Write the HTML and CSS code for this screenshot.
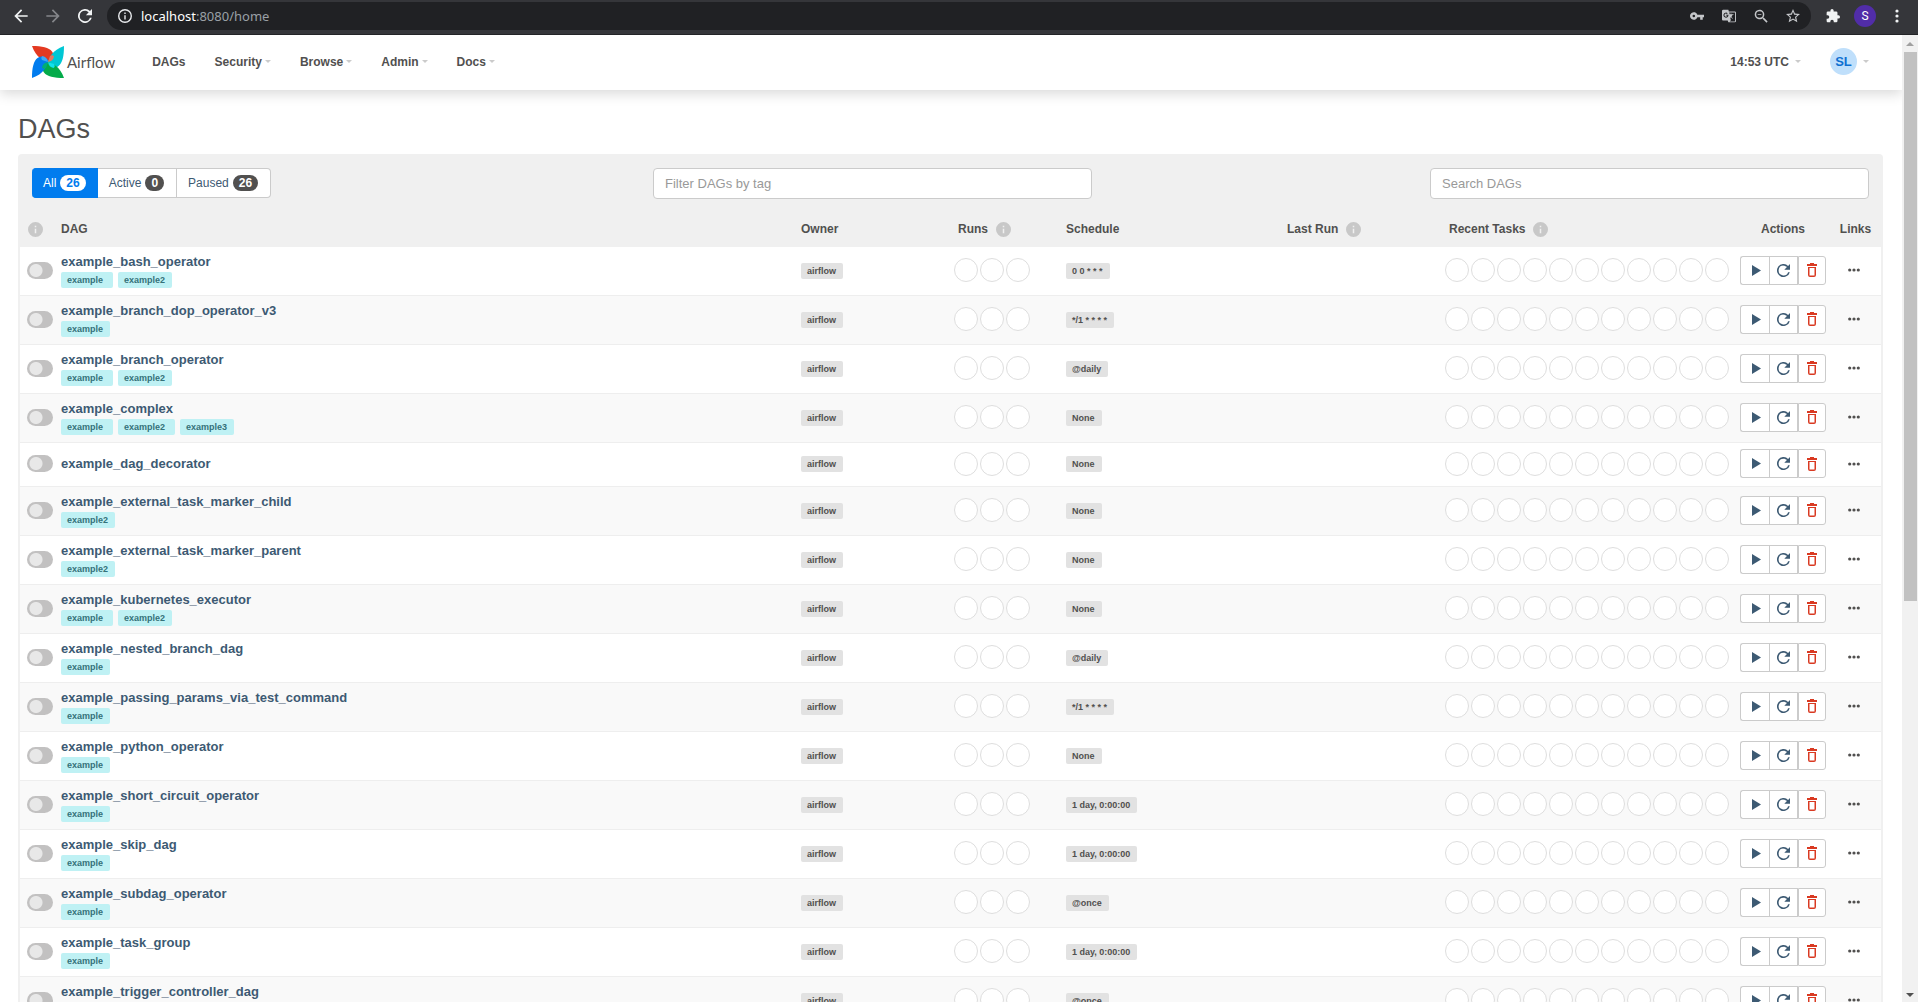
FILE: index.html
```html
<!DOCTYPE html>
<html lang="en">
<head>
<meta charset="utf-8">
<title>Airflow - DAGs</title>
<link rel="stylesheet" href="styles.css">
</head>
<body>
<svg class="sprite" aria-hidden="true">
  <symbol id="i-back" viewBox="0 0 24 24"><path d="M20 11H7.8l5.6-5.6L12 4l-8 8 8 8 1.4-1.4L7.8 13H20z"/></symbol>
  <symbol id="i-forward" viewBox="0 0 24 24"><path d="M12 4l-1.4 1.4 5.6 5.6H4v2h12.2l-5.6 5.6L12 20l8-8z"/></symbol>
  <symbol id="i-reload" viewBox="4 4 16 16"><path d="M17.65 6.35A8 8 0 1 0 19.73 14h-2.08A6 6 0 1 1 12 6c1.66 0 3.14.69 4.22 1.78L13 11h7V4z"/></symbol>
  <symbol id="i-info" viewBox="2 2 20 20"><path d="M11 7h2v2h-2zm0 4h2v6h-2zm1-9a10 10 0 1 0 0 20 10 10 0 0 0 0-20zm0 18a8 8 0 1 1 0-16 8 8 0 0 1 0 16z"/></symbol>
  <symbol id="i-infofill" viewBox="2 2 20 20"><path d="M12 2a10 10 0 1 0 0 20 10 10 0 0 0 0-20zm1 15h-2v-6h2zm0-8h-2V7h2z"/></symbol>
  <symbol id="i-key" viewBox="1 1 22 22"><path d="M12.65 10a6 6 0 1 0 0 4H17v4h4v-4h2v-4zM7 14a2 2 0 1 1 0-4 2 2 0 0 1 0 4z"/></symbol>
  <symbol id="i-translate" viewBox="1 1 22 22"><path d="M21 5h-9.2L11 2H3a2 2 0 0 0-2 2v13c0 1.100.9 2 2 2h7l1 3h10a2 2 0 0 0 2-2V7a2 2 0 0 0-2-2zM7.200 14.600a4 4 0 1 1 2.700-7L8.700 8.800a2.400 2.400 0 1 0 .8 2.600H7.200V9.900h3.900c.3 2.600-1.300 4.700-3.900 4.700zM21.500 20a.5.5 0 0 1-.5.5h-8l2-2-1-3.500.9-.9 2.400 2.400.8-.8-2.300-2.300c.8-.9 1.300-2 1.600-3.100H19V9.100h-3.300V8h-1.100v1.100h-1.500L12.200 6.500H21a.5.5 0 0 1 .5.500z"/></symbol>
  <symbol id="i-zoomout" viewBox="2 2 19 19"><path d="M15.500 14h-.8l-.3-.3a6.500 6.500 0 1 0-.7.7l.3.3v.8l5 5 1.500-1.500zm-6 0a4.500 4.500 0 1 1 0-9 4.500 4.500 0 0 1 0 9zM7 9h5v1H7z"/></symbol>
  <symbol id="i-star" viewBox="2 2 20 20"><path d="M22 9.200l-7.200-.6L12 2 9.200 8.600 2 9.200l5.500 4.700L5.800 21 12 17.300 18.200 21l-1.600-7.100zM12 15.400l-3.800 2.300 1-4.300-3.300-2.900 4.400-.4L12 6.100l1.700 4 4.400.4-3.300 2.900 1 4.300z"/></symbol>
  <symbol id="i-puzzle" viewBox="1 1 22 22"><path d="M20.500 11H19V7a2 2 0 0 0-2-2h-4V3.500a2.500 2.500 0 0 0-5 0V5H4a2 2 0 0 0-2 2v3.800h1.500a2.700 2.700 0 0 1 0 5.400H2V20c0 1.100.9 2 2 2h3.800v-1.500a2.700 2.700 0 0 1 5.400 0V22H17a2 2 0 0 0 2-2v-4h1.500a2.500 2.500 0 0 0 0-5z"/></symbol>
  <symbol id="i-more" viewBox="0 0 4 14"><circle cx="2" cy="2" r="1.600"/><circle cx="2" cy="7" r="1.600"/><circle cx="2" cy="12" r="1.600"/></symbol>
  <symbol id="i-play" viewBox="0 0 9 11"><path d="M0 0l9 5.500L0 11z"/></symbol>
  <symbol id="i-delete" viewBox="0 0 10 14"><path fill-rule="evenodd" d="M3 0h4v1h3v2H0V1h3zM1 4h8v8a2 2 0 0 1-2 2H3a2 2 0 0 1-2-2zM2.500 5v7.500h5V5z"/></symbol>
  <symbol id="i-dots" viewBox="0 0 12 4"><circle cx="1.700" cy="2" r="1.600"/><circle cx="6" cy="2" r="1.600"/><circle cx="10.300" cy="2" r="1.600"/></symbol>
</svg>

<header class="browser">
  <button class="tool" aria-label="Back"><svg class="arrow"><use href="#i-back"/></svg></button>
  <button class="tool dim" aria-label="Forward"><svg class="arrow"><use href="#i-forward"/></svg></button>
  <button class="tool" aria-label="Reload"><svg><use href="#i-reload"/></svg></button>
  <div class="address">
    <svg class="site-info"><use href="#i-info"/></svg>
    <span class="url"><b>localhost</b>:8080/home</span>
    <button class="tool" aria-label="Passwords"><svg><use href="#i-key"/></svg></button>
    <button class="tool" aria-label="Translate"><svg><use href="#i-translate"/></svg></button>
    <button class="tool" aria-label="Zoom"><svg><use href="#i-zoomout"/></svg></button>
    <button class="tool" aria-label="Bookmark"><svg><use href="#i-star"/></svg></button>
  </div>
  <button class="tool" aria-label="Extensions"><svg><use href="#i-puzzle"/></svg></button>
  <button class="profile">S</button>
  <button class="tool" aria-label="Menu"><svg><use href="#i-more"/></svg></button>
</header>

<div class="viewport">
  <div class="page">
    <nav class="navbar">
      <a class="brand" href="#">
        <svg class="logo" viewBox="0 0 32 32">
          <defs>
            <path id="blade" d="M0 0C10 0 17 1.500 20 5.500c2.500 3 2 6.500-2 10.500h-3C13 14 11 14.500 8 12 5 9.500 2 6 0 0z"/>
            <path id="fold" d="M18 10c2-1 3-1 4 .5-.5 3-2.500 5-6 5.500z"/>
          </defs>
          <use href="#blade" fill="#e43921"/>
          <use href="#blade" fill="#00c7d4" transform="rotate(90 16 16)"/>
          <use href="#blade" fill="#04ab4a" transform="rotate(180 16 16)"/>
          <use href="#blade" fill="#017cee" transform="rotate(270 16 16)"/>
          <use href="#fold" fill="#e8765f"/>
          <use href="#fold" fill="#11e1ee" transform="rotate(90 16 16)"/>
          <use href="#fold" fill="#00ad7a" transform="rotate(180 16 16)"/>
          <use href="#fold" fill="#3fa9f5" transform="rotate(270 16 16)"/>
        </svg>
        <span>Airflow</span>
      </a>
      <a class="menu" href="#">DAGs</a>
      <a class="menu caret" href="#">Security</a>
      <a class="menu caret" href="#">Browse</a>
      <a class="menu caret" href="#">Admin</a>
      <a class="menu caret" href="#">Docs</a>
      <a class="menu caret clock" href="#">14:53 UTC</a>
      <a class="menu caret user" href="#"><span class="avatar">SL</span></a>
    </nav>

    <main>
      <h1>DAGs</h1>
      <section class="panel">
        <div class="toolbar">
          <div class="filters">
            <button class="on">All <span class="badge">26</span></button>
            <button>Active <span class="badge">0</span></button>
            <button>Paused <span class="badge">26</span></button>
          </div>
          <input class="field" type="text" placeholder="Filter DAGs by tag" aria-label="Filter DAGs by tag">
          <input class="field search" type="text" placeholder="Search DAGs" aria-label="Search DAGs">
        </div>
        <table class="dags">
          <thead>
            <tr>
              <th class="c-toggle"><svg class="hint"><use href="#i-infofill"/></svg></th>
              <th>DAG</th>
              <th class="c-owner">Owner</th>
              <th class="c-runs"><span>Runs</span><svg class="hint"><use href="#i-infofill"/></svg></th>
              <th class="c-schedule">Schedule</th>
              <th class="c-last"><span>Last Run</span><svg class="hint"><use href="#i-infofill"/></svg></th>
              <th class="c-tasks"><span>Recent Tasks</span><svg class="hint"><use href="#i-infofill"/></svg></th>
              <th class="c-actions">Actions</th>
              <th class="c-links">Links</th>
            </tr>
          </thead>
          <tbody id="rows"></tbody>
        </table>
      </section>
    </main>
  </div>
  <div class="scrollbar"><i class="up"></i><i class="thumb"></i><i class="rest"></i><i class="down"></i></div>
</div>
<script src="dags.js"></script>
</body>
</html>
```
FILE: styles.css
```css
* { box-sizing: border-box; }
body {
  margin: 0;
  height: 100vh;
  display: flex;
  flex-direction: column;
  overflow: hidden;
  background: #fff;
  color: #51504f;
  font: 13px/18px "Liberation Sans", Arial, sans-serif;
}
button, input { font: inherit; margin: 0; }
button { cursor: pointer; }
a { text-decoration: none; }
svg { display: block; fill: currentColor; }
.sprite { position: absolute; width: 0; height: 0; }

/* Browser chrome */
.browser {
  flex: none;
  display: flex;
  align-items: center;
  gap: 4px;
  height: 35px;
  padding: 0 7px 3px;
  background: #35363a;
  border-bottom: 1px solid #232427;
}
.tool {
  display: grid;
  place-items: center;
  width: 28px;
  height: 28px;
  padding: 0;
  border: 0;
  background: none;
  color: #f1f3f4;
}
.tool svg { width: 14px; height: 14px; }
.tool .arrow { width: 20px; height: 20px; }
.tool.dim { color: #85868a; }
.address {
  flex: 1;
  display: flex;
  align-items: center;
  gap: 4px;
  height: 28px;
  margin: 0 4px;
  padding: 0 4px 0 11px;
  border-radius: 14px;
  background: #202124;
}
.address .tool { color: #c4c6c9; }
.site-info { width: 14px; height: 14px; color: #e8eaed; }
.url { flex: 1; margin-left: 5px; color: #9aa0a6; font: 13px/20px "Noto Sans", sans-serif; }
.url b { color: #fff; font-weight: 400; }
.profile {
  width: 22px;
  height: 22px;
  margin: 0 3px;
  padding: 0;
  border: 0;
  border-radius: 50%;
  background: #512da8;
  color: #fff;
  font: 12px/22px Roboto, sans-serif;
}

.viewport { flex: 1; display: flex; min-height: 0; }
.page { flex: 1; min-width: 0; overflow: hidden; }

/* Navigation */
.navbar {
  display: flex;
  align-items: center;
  gap: 29px;
  height: 55px;
  padding: 0 33px 2px 32px;
  background: #fff;
  box-shadow: 0 4px 12px rgba(0, 0, 0, .15);
}
.brand {
  display: flex;
  align-items: center;
  gap: 3px;
  margin-right: 8px;
  color: #51504f;
  font: 15px/20px Lato, sans-serif;
}
.logo { width: 32px; height: 32px; }
.menu {
  display: flex;
  align-items: center;
  gap: 3px;
  color: #51504f;
  font-size: 12px;
  font-weight: 700;
}
.caret::after {
  content: "";
  border: 3px solid transparent;
  border-top-color: #cbcbcb;
  border-bottom: 0;
}
.clock { margin-left: auto; }
.clock, .user { gap: 6px; }
.avatar {
  width: 27px;
  height: 27px;
  border-radius: 50%;
  background: #bfdffb;
  color: #0d6fd1;
  font-size: 13px;
  line-height: 27px;
  text-align: center;
}

main { padding: 0 19px 0 18px; }
h1 { margin: 24px 0 10px; font-size: 27px; line-height: 30px; font-weight: 400; }

/* DAG list */
.panel { padding: 0 2px; border-radius: 4px 4px 0 0; background: #f0f0f0; }
.toolbar {
  display: grid;
  grid-template-columns: 621fr 439fr 338fr 439fr;
  padding: 14px 12px 12px;
}
.filters { display: flex; }
.filters button {
  display: flex;
  align-items: center;
  gap: 4px;
  height: 30px;
  padding: 0 12px 0 11px;
  border: 1px solid #cbcbcb;
  border-left-width: 0;
  background: #fff;
  color: #3d5a73;
  font-size: 12px;
}
.filters button:last-child { border-radius: 0 4px 4px 0; }
.filters .on {
  padding: 0 11px;
  border-color: #017cee;
  border-radius: 4px 0 0 4px;
  background: #017cee;
  color: #fff;
}
.badge {
  height: 16px;
  padding: 0 6px;
  border-radius: 8px;
  background: #51504f;
  color: #fff;
  font-size: 12px;
  font-weight: 700;
  line-height: 16px;
}
.on .badge { background: #fff; color: #017cee; }
.field {
  width: 100%;
  height: 31px;
  padding: 0 11px;
  border: 1px solid #cbcbcb;
  border-radius: 4px;
  background: #fff;
}
.field::placeholder { color: #999; opacity: 1; }
.search { grid-column: 4; }

.dags { width: 100%; table-layout: fixed; border-collapse: separate; border-spacing: 0; }
.dags th { padding: 9px 4px; text-align: left; font-size: 12px; }
.dags td { padding: 6px 4px 8px; vertical-align: middle; border-bottom: 1px solid #eee; }
.dags tbody tr { background: #fff; }
.dags tbody tr:nth-child(even) { background: #f9f9f9; }
.dags .c-toggle { width: 37px; padding-left: 7px; padding-right: 0; }
.c-owner { width: 153px; }
.c-runs { width: 112px; }
.c-schedule { width: 221px; }
.c-last { width: 158px; }
.c-tasks { width: 295px; }
.c-actions { width: 94px; }
.c-links { width: 51px; }
.dags .c-actions, .dags .c-links { text-align: center; }
.dags th.c-runs, .dags th.c-tasks { padding-left: 8px; }
.hint { display: inline-block; width: 15px; height: 15px; color: #c8c8c8; vertical-align: middle; }
th span + .hint { margin-left: 8px; }
.c-toggle .hint { margin-left: 1px; }

.toggle {
  appearance: none;
  display: block;
  width: 26px;
  height: 17px;
  border-radius: 9px;
  background: radial-gradient(circle at 9px center, #e8e8e8 6px, transparent 7px) #c2c1c1;
}
.dags .c-name { padding-bottom: 7px; }
.name { display: block; color: #3d5a73; font-weight: 700; }
.tags { display: flex; gap: 5px; margin-top: 1px; }
.tag, .label {
  display: inline-block;
  height: 16px;
  padding: 0 7px 0 6px;
  border-radius: 2px;
  font-size: 9px;
  line-height: 16px;
  font-weight: 700;
  vertical-align: middle;
}
.tag { background: #bff1f4; color: #35727a; }
.tag:not(:last-child) { padding-right: 10px; }
.label { background: #e2e2e2; color: #51504f; }

.circles { display: flex; gap: 2px; }
.circles i { width: 24px; height: 24px; border: 1px solid #dedede; border-radius: 50%; background: #fff; }

.actions { display: flex; }
.actions button {
  display: grid;
  place-items: center;
  flex: 1;
  height: 29px;
  padding: 0;
  border: 1px solid #cbcbcb;
  background: #fff;
  color: #3d5a73;
}
.actions button:first-child { padding-left: 2px; border-right: 0; border-radius: 3px 0 0 3px; }
.actions button:last-child { border-radius: 0 3px 3px 0; color: #d93a22; }
.play { width: 9px; height: 11px; }
.refresh { width: 13px; height: 13px; }
.delete { width: 10px; height: 14px; }
.dags .c-menu { padding-right: 7px; }
.dots { width: 12px; height: 4px; margin: 0 auto; }

/* Window scrollbar */
.scrollbar {
  flex: none;
  display: flex;
  flex-direction: column;
  align-items: center;
  width: 16px;
  padding: 7px 1px 5px;
  background: #f1f1f1;
}
.scrollbar .up { border: 4px solid transparent; border-top: 0; border-bottom-color: #a0a0a0; }
.scrollbar .thumb { flex: 7; width: 13px; margin-top: 6px; background: #c1c1c1; }
.scrollbar .rest { flex: 5; }
.scrollbar .down { border: 4px solid transparent; border-bottom: 0; border-top-color: #505050; }
```
FILE: dags.js
```js
const dags = [
  ["example_bash_operator", "0 0 * * *", ["example", "example2"]],
  ["example_branch_dop_operator_v3", "*/1 * * * *", ["example"]],
  ["example_branch_operator", "@daily", ["example", "example2"]],
  ["example_complex", "None", ["example", "example2", "example3"]],
  ["example_dag_decorator", "None", []],
  ["example_external_task_marker_child", "None", ["example2"]],
  ["example_external_task_marker_parent", "None", ["example2"]],
  ["example_kubernetes_executor", "None", ["example", "example2"]],
  ["example_nested_branch_dag", "@daily", ["example"]],
  ["example_passing_params_via_test_command", "*/1 * * * *", ["example"]],
  ["example_python_operator", "None", ["example"]],
  ["example_short_circuit_operator", "1 day, 0:00:00", ["example"]],
  ["example_skip_dag", "1 day, 0:00:00", ["example"]],
  ["example_subdag_operator", "@once", ["example"]],
  ["example_task_group", "1 day, 0:00:00", ["example"]],
  ["example_trigger_controller_dag", "@once", ["example"]]
];

const circles = (count) => `<div class="circles">${"<i></i>".repeat(count)}</div>`;
const icon = (cls, id) => `<svg class="${cls}"><use href="#${id}"/></svg>`;
const tagList = (tags) =>
  tags.length ? `<div class="tags">${tags.map((t) => `<a class="tag" href="#">${t}</a>`).join("")}</div>` : "";

document.getElementById("rows").innerHTML = dags.map(([name, schedule, tags]) => `
  <tr>
    <td class="c-toggle"><input class="toggle" type="checkbox" aria-label="Unpause ${name}"></td>
    <td class="c-name"><a class="name" href="#">${name}</a>${tagList(tags)}</td>
    <td><a class="label" href="#">airflow</a></td>
    <td>${circles(3)}</td>
    <td><a class="label" href="#">${schedule}</a></td>
    <td></td>
    <td>${circles(11)}</td>
    <td><div class="actions">
      <button aria-label="Trigger">${icon("play", "i-play")}</button>
      <button aria-label="Refresh">${icon("refresh", "i-reload")}</button>
      <button aria-label="Delete">${icon("delete", "i-delete")}</button>
    </div></td>
    <td class="c-menu">${icon("dots", "i-dots")}</td>
  </tr>`).join("");
```
